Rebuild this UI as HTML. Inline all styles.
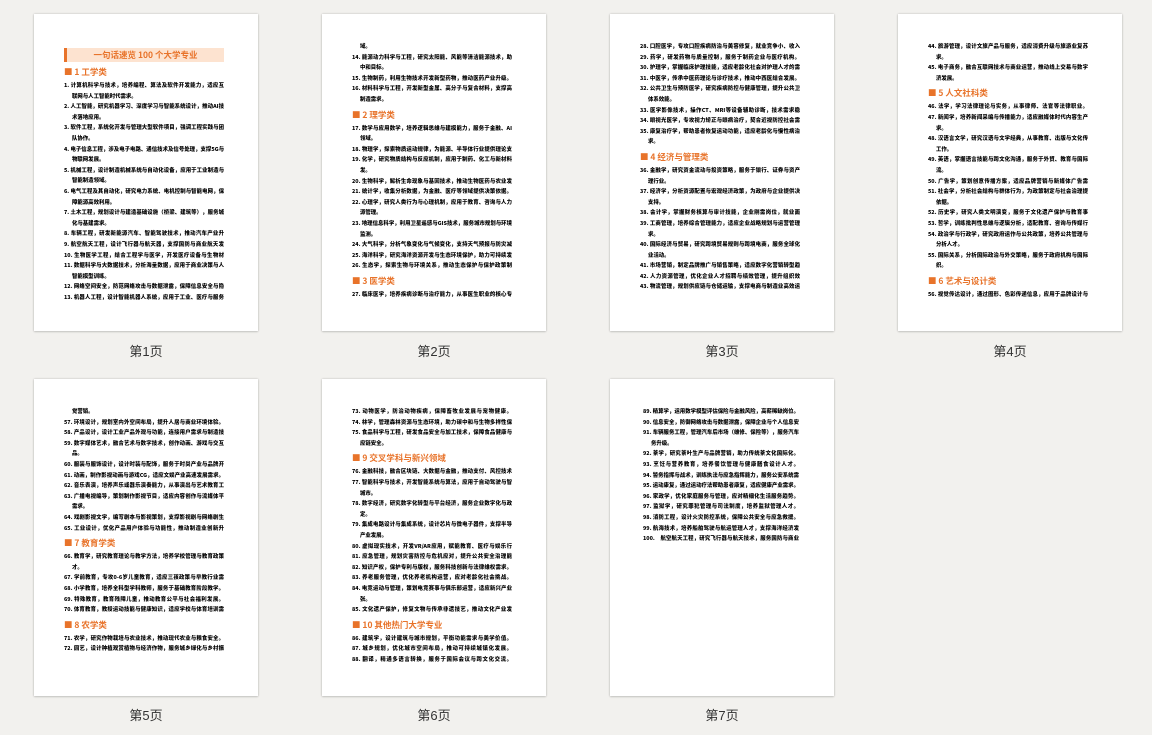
<!DOCTYPE html>
<html><head><meta charset="utf-8">
<style>
html,body{margin:0;padding:0;}
body{width:1152px;height:735px;background:#f2f1ee;position:relative;overflow:hidden;font-family:"Liberation Sans","Noto Sans CJK SC",sans-serif;}
.pg{position:absolute;width:224px;height:317px;background:#fff;box-shadow:0 0 2px rgba(0,0,0,.22),0 1px 2px rgba(0,0,0,.12);}
.lab{position:absolute;width:224px;text-align:center;font-size:13px;color:#333;line-height:16px;}
.c{position:absolute;left:30px;width:160px;font-weight:900;font-size:5.4px;line-height:10.6px;color:#000;font-family:"Noto Sans CJK SC","WenQuanYi Zen Hei",sans-serif;}
.c div{overflow:hidden;height:10.6px;}
.j{text-align:justify;text-align-last:justify;}
.i{padding-left:8px;}
.h{color:#e8732a;font-size:8.5px!important;height:15px!important;line-height:15px!important;margin-top:3px;font-weight:bold;}
.h:first-child{margin-top:0}
.t{height:14px!important;line-height:14px!important;background:#fde3d0;border-left:3px solid #e8732a;color:#e8732a;font-size:8.5px!important;font-weight:bold;text-align:center;margin-bottom:2px;}
</style></head><body>

<!-- Page 1 -->
<div class="pg" style="left:34px;top:14px">
<div class="c" style="top:34px">
<div class="t">一句话速览 100 个大学专业</div>
<div class="h">■ 1 工学类</div>
<div class="j">1. 计算机科学与技术，培养编程、算法及软件开发能力，适应互</div>
<div class="i">联网与人工智能时代需求。</div>
<div class="j">2. 人工智能，研究机器学习、深度学习与智能系统设计，推动AI技</div>
<div class="i">术落地应用。</div>
<div class="j">3. 软件工程，系统化开发与管理大型软件项目，强调工程实践与团</div>
<div class="i">队协作。</div>
<div class="j">4. 电子信息工程，涉及电子电路、通信技术及信号处理，支撑5G与</div>
<div class="i">物联网发展。</div>
<div class="j">5. 机械工程，设计制造机械系统与自动化设备，应用于工业制造与</div>
<div class="i">智能制造领域。</div>
<div class="j">6. 电气工程及其自动化，研究电力系统、电机控制与智能电网，保</div>
<div class="i">障能源高效利用。</div>
<div class="j">7. 土木工程，规划设计与建造基础设施（桥梁、建筑等），服务城市</div>
<div class="i">化与基建需求。</div>
<div class="j">8. 车辆工程，研发新能源汽车、智能驾驶技术，推动汽车产业升级。</div>
<div class="j">9. 航空航天工程，设计飞行器与航天器，支撑国防与商业航天发展。</div>
<div class="j">10. 生物医学工程，结合工程学与医学，开发医疗设备与生物材料。</div>
<div class="j">11. 数据科学与大数据技术，分析海量数据，应用于商业决策与人工</div>
<div class="i">智能模型训练。</div>
<div class="j">12. 网络空间安全，防范网络攻击与数据泄露，保障信息安全与隐私。</div>
<div class="j">13. 机器人工程，设计智能机器人系统，应用于工业、医疗与服务领</div>
</div></div>
<div class="lab" style="left:34px;top:344px">第1页</div>

<!-- Page 2 -->
<div class="pg" style="left:322px;top:14px">
<div class="c" style="top:27px">
<div class="i">域。</div>
<div class="j">14. 能源动力科学与工程，研究太阳能、风能等清洁能源技术，助力碳</div>
<div class="i">中和目标。</div>
<div class="j">15. 生物制药，利用生物技术开发新型药物，推动医药产业升级。</div>
<div class="j">16. 材料科学与工程，开发新型金属、高分子与复合材料，支撑高端</div>
<div class="i">制造需求。</div>
<div class="h">■ 2 理学类</div>
<div class="j">17. 数学与应用数学，培养逻辑思维与建模能力，服务于金融、AI等</div>
<div class="i">领域。</div>
<div class="j">18. 物理学，探索物质运动规律，为能源、半导体行业提供理论支撑。</div>
<div class="j">19. 化学，研究物质结构与反应机制，应用于制药、化工与新材料研</div>
<div class="i">发。</div>
<div class="j">20. 生物科学，解析生命现象与基因技术，推动生物医药与农业发展。</div>
<div class="j">21. 统计学，收集分析数据，为金融、医疗等领域提供决策依据。</div>
<div class="j">22. 心理学，研究人类行为与心理机制，应用于教育、咨询与人力资</div>
<div class="i">源管理。</div>
<div class="j">23. 地理信息科学，利用卫星遥感与GIS技术，服务城市规划与环境</div>
<div class="i">监测。</div>
<div class="j">24. 大气科学，分析气象变化与气候变化，支持天气预报与防灾减灾。</div>
<div class="j">25. 海洋科学，研究海洋资源开发与生态环境保护，助力可持续发展。</div>
<div class="j">26. 生态学，探索生物与环境关系，推动生态保护与保护政策制定。</div>
<div class="h">■ 3 医学类</div>
<div class="j">27. 临床医学，培养疾病诊断与治疗能力，从事医生职业的核心专业。</div>
</div></div>
<div class="lab" style="left:322px;top:344px">第2页</div>

<!-- Page 3 -->
<div class="pg" style="left:610px;top:14px">
<div class="c" style="top:27px">
<div class="j">28. 口腔医学，专攻口腔疾病防治与美容修复，就业竞争小、收入高。</div>
<div class="j">29. 药学，研发药物与质量控制，服务于制药企业与医疗机构。</div>
<div class="j">30. 护理学，掌握临床护理技能，适应老龄化社会对护理人才的需求。</div>
<div class="j">31. 中医学，传承中医药理论与诊疗技术，推动中西医结合发展。</div>
<div class="j">32. 公共卫生与预防医学，研究疾病防控与健康管理，提升公共卫生</div>
<div class="i">体系效能。</div>
<div class="j">33. 医学影像技术，操作CT、MRI等设备辅助诊断，技术需求稳定。</div>
<div class="j">34. 眼视光医学，专攻视力矫正与眼病治疗，契合近视防控社会需求。</div>
<div class="j">35. 康复治疗学，帮助患者恢复运动功能，适应老龄化与慢性病治疗需</div>
<div class="i">求。</div>
<div class="h">■ 4 经济与管理类</div>
<div class="j">36. 金融学，研究资金流动与投资策略，服务于银行、证券与资产管</div>
<div class="i">理行业。</div>
<div class="j">37. 经济学，分析资源配置与宏观经济政策，为政府与企业提供决策</div>
<div class="i">支持。</div>
<div class="j">38. 会计学，掌握财务核算与审计技能，企业刚需岗位，就业面广。</div>
<div class="j">39. 工商管理，培养综合管理能力，适应企业战略规划与运营管理需</div>
<div class="i">求。</div>
<div class="j">40. 国际经济与贸易，研究跨境贸易规则与跨境电商，服务全球化商</div>
<div class="i">业活动。</div>
<div class="j">41. 市场营销，制定品牌推广与销售策略，适应数字化营销转型趋势。</div>
<div class="j">42. 人力资源管理，优化企业人才招聘与绩效管理，提升组织效能。</div>
<div class="j">43. 物流管理，规划供应链与仓储运输，支撑电商与制造业高效运转。</div>
</div></div>
<div class="lab" style="left:610px;top:344px">第3页</div>

<!-- Page 4 -->
<div class="pg" style="left:898px;top:14px">
<div class="c" style="top:27px">
<div class="j">44. 旅游管理，设计文旅产品与服务，适应消费升级与旅游业复苏需</div>
<div class="i">求。</div>
<div class="j">45. 电子商务，融合互联网技术与商业运营，推动线上交易与数字经</div>
<div class="i">济发展。</div>
<div class="h">■ 5 人文社科类</div>
<div class="j">46. 法学，学习法律理论与实务，从事律师、法官等法律职业。</div>
<div class="j">47. 新闻学，培养新闻采编与传播能力，适应融媒体时代内容生产需</div>
<div class="i">求。</div>
<div class="j">48. 汉语言文学，研究汉语与文学经典，从事教育、出版与文化传播</div>
<div class="i">工作。</div>
<div class="j">49. 英语，掌握语言技能与跨文化沟通，服务于外贸、教育与国际交</div>
<div class="i">流。</div>
<div class="j">50. 广告学，策划创意传播方案，适应品牌营销与新媒体广告需求。</div>
<div class="j">51. 社会学，分析社会结构与群体行为，为政策制定与社会治理提供</div>
<div class="i">依据。</div>
<div class="j">52. 历史学，研究人类文明演变，服务于文化遗产保护与教育事业。</div>
<div class="j">53. 哲学，训练批判性思维与逻辑分析，适配教育、咨询与传媒行业。</div>
<div class="j">54. 政治学与行政学，研究政府运作与公共政策，培养公共管理与政策</div>
<div class="i">分析人才。</div>
<div class="j">55. 国际关系，分析国际政治与外交策略，服务于政府机构与国际组</div>
<div class="i">织。</div>
<div class="h">■ 6 艺术与设计类</div>
<div class="j">56. 视觉传达设计，通过图形、色彩传递信息，应用于品牌设计与视</div>
</div></div>
<div class="lab" style="left:898px;top:344px">第4页</div>

<!-- Page 5 -->
<div class="pg" style="left:34px;top:379px">
<div class="c" style="top:27px">
<div class="i">觉营销。</div>
<div class="j">57. 环境设计，规划室内外空间布局，提升人居与商业环境体验。</div>
<div class="j">58. 产品设计，设计工业产品外观与功能，连接用户需求与制造技术。</div>
<div class="j">59. 数字媒体艺术，融合艺术与数字技术，创作动画、游戏与交互作</div>
<div class="i">品。</div>
<div class="j">60. 服装与服饰设计，设计时装与配饰，服务于时尚产业与品牌开发。</div>
<div class="j">61. 动画，制作影视动画与游戏CG，适应文娱产业高速发展需求。</div>
<div class="j">62. 音乐表演，培养声乐或器乐演奏能力，从事演出与艺术教育工作。</div>
<div class="j">63. 广播电视编导，策划制作影视节目，适应内容创作与流媒体平台</div>
<div class="i">需求。</div>
<div class="j">64. 戏剧影视文学，编写剧本与影视策划，支撑影视剧与网络剧生产。</div>
<div class="j">65. 工业设计，优化产品用户体验与功能性，推动制造业创新升级。</div>
<div class="h">■ 7 教育学类</div>
<div class="j">66. 教育学，研究教育理论与教学方法，培养学校管理与教育政策人</div>
<div class="i">才。</div>
<div class="j">67. 学前教育，专攻0-6岁儿童教育，适应三孩政策与早教行业需求。</div>
<div class="j">68. 小学教育，培养全科型学科教师，服务于基础教育阶段教学。</div>
<div class="j">69. 特殊教育，教育残障儿童，推动教育公平与社会福利发展。</div>
<div class="j">70. 体育教育，教授运动技能与健康知识，适应学校与体育培训需求。</div>
<div class="h">■ 8 农学类</div>
<div class="j">71. 农学，研究作物栽培与农业技术，推动现代农业与粮食安全。</div>
<div class="j">72. 园艺，设计种植观赏植物与经济作物，服务城乡绿化与乡村振兴。</div>
</div></div>
<div class="lab" style="left:34px;top:708px">第5页</div>

<!-- Page 6 -->
<div class="pg" style="left:322px;top:379px">
<div class="c" style="top:27px">
<div class="j">73. 动物医学，防治动物疾病，保障畜牧业发展与宠物健康。</div>
<div class="j">74. 林学，管理森林资源与生态环境，助力碳中和与生物多样性保护。</div>
<div class="j">75. 食品科学与工程，研发食品安全与加工技术，保障食品健康与供</div>
<div class="i">应链安全。</div>
<div class="h">■ 9 交叉学科与新兴领域</div>
<div class="j">76. 金融科技，融合区块链、大数据与金融，推动支付、风控技术革新。</div>
<div class="j">77. 智能科学与技术，开发智能系统与算法，应用于自动驾驶与智慧</div>
<div class="i">城市。</div>
<div class="j">78. 数字经济，研究数字化转型与平台经济，服务企业数字化与政策制</div>
<div class="i">定。</div>
<div class="j">79. 集成电路设计与集成系统，设计芯片与微电子器件，支撑半导体</div>
<div class="i">产业发展。</div>
<div class="j">80. 虚拟现实技术，开发VR/AR应用，赋能教育、医疗与娱乐行业。</div>
<div class="j">81. 应急管理，规划灾害防控与危机应对，提升公共安全治理能力。</div>
<div class="j">82. 知识产权，保护专利与版权，服务科技创新与法律维权需求。</div>
<div class="j">83. 养老服务管理，优化养老机构运营，应对老龄化社会挑战。</div>
<div class="j">84. 电竞运动与管理，策划电竞赛事与俱乐部运营，适应新兴产业扩</div>
<div class="i">张。</div>
<div class="j">85. 文化遗产保护，修复文物与传承非遗技艺，推动文化产业发展。</div>
<div class="h">■ 10 其他热门大学专业</div>
<div class="j">86. 建筑学，设计建筑与城市规划，平衡功能需求与美学价值。</div>
<div class="j">87. 城乡规划，优化城市空间布局，推动可持续城镇化发展。</div>
<div class="j">88. 翻译，精通多语言转换，服务于国际会议与跨文化交流。</div>
</div></div>
<div class="lab" style="left:322px;top:708px">第6页</div>

<!-- Page 7 -->
<div class="pg" style="left:610px;top:379px">
<div class="c" style="top:27px;left:33px;width:156px">
<div class="j">89. 精算学，运用数学模型评估保险与金融风险，高薪稀缺岗位。</div>
<div class="j">90. 信息安全，防御网络攻击与数据泄露，保障企业与个人信息安全。</div>
<div class="j">91. 车辆服务工程，管理汽车后市场（维修、保险等），服务汽车服</div>
<div class="i">务升级。</div>
<div class="j">92. 茶学，研究茶叶生产与品牌营销，助力传统茶文化国际化。</div>
<div class="j">93. 烹饪与营养教育，培养餐饮管理与健康膳食设计人才。</div>
<div class="j">94. 警务指挥与战术，训练执法与应急指挥能力，服务公安系统需求。</div>
<div class="j">95. 运动康复，通过运动疗法帮助患者康复，适应健康产业需求。</div>
<div class="j">96. 家政学，优化家庭服务与管理，应对精细化生活服务趋势。</div>
<div class="j">97. 监狱学，研究罪犯管理与司法制度，培养监狱管理人才。</div>
<div class="j">98. 消防工程，设计火灾防控系统，保障公共安全与应急救援。</div>
<div class="j">99. 航海技术，培养船舶驾驶与航运管理人才，支撑海洋经济发展。</div>
<div class="j">100.　航空航天工程，研究飞行器与航天技术，服务国防与商业航天。</div>
</div></div>
<div class="lab" style="left:610px;top:708px">第7页</div>

</body></html>
